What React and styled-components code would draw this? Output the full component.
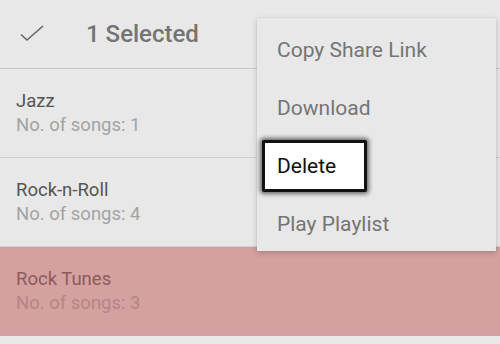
import React from "react";
import styled, { createGlobalStyle } from "styled-components";

const Global = createGlobalStyle`
  html, body {
    margin: 0;
    padding: 0;
    background: #e8e8e8;
    font-family: Roboto, "Liberation Sans", sans-serif;
  }
`;

const Screen = styled.div`
  position: relative;
  width: 500px;
  height: 344px;
  overflow: hidden;
  background: #e8e8e8;
`;

const Toolbar = styled.header`
  display: flex;
  align-items: center;
  height: 68px;
  border-bottom: 1px solid #c9c9c9;
  padding-left: 19px;
  gap: 41px;

  svg {
    flex: none;
  }
`;

const Title = styled.h1`
  margin: 0;
  font-size: 24px;
  font-weight: 500;
  color: #747474;
`;

const Row = styled.div`
  height: 89px;
  box-sizing: border-box;
  display: flex;
  flex-direction: column;
  justify-content: center;
  padding: 0 16px;
  border-bottom: 1px solid ${(p) => (p.$selected ? "#d2a0a0" : "#cfcfcf")};
  background: ${(p) => (p.$selected ? "#d4a0a0" : "transparent")};
`;

const Name = styled.div`
  font-size: 18.5px;
  line-height: 24px;
  color: ${(p) => (p.$selected ? "#8c5c5c" : "#555")};
`;

const Count = styled.div`
  font-size: 18.5px;
  line-height: 24px;
  color: ${(p) => (p.$selected ? "#b68585" : "#a3a3a3")};
`;

const Menu = styled.ul`
  position: absolute;
  top: 18px;
  left: 257px;
  width: 239px;
  height: 233px;
  box-sizing: border-box;
  margin: 0;
  padding: 3px 0 0;
  list-style: none;
  background: #e8e8e8;
  box-shadow: 0 2px 6px rgba(0, 0, 0, 0.18), 0 0 2px rgba(0, 0, 0, 0.08);
`;

const Item = styled.li`
  height: 58px;
  display: flex;
  align-items: center;
  padding-left: 20px;
  font-size: 21px;
  color: #757575;
`;

const FocusBox = styled.span`
  display: flex;
  align-items: center;
  width: 105px;
  height: 52px;
  box-sizing: border-box;
  margin-left: -15px;
  padding-left: 12px;
  background: #fff;
  border: 3px solid #111;
  border-radius: 2px;
  color: #111;
  box-shadow: 0 0 4px 2px rgba(0, 0, 0, 0.55);
`;

const lists = [
  { name: "Jazz", count: 1 },
  { name: "Rock-n-Roll", count: 4 },
  { name: "Rock Tunes", count: 3, selected: true },
];

const CheckIcon = () => (
  <svg width="26" height="20" viewBox="0 0 26 20">
    <polyline
      points="2,10.5 8,16 24,2"
      fill="none"
      stroke="#666"
      strokeWidth="1.6"
    />
  </svg>
);

export default function App() {
  return (
    <Screen>
      <Global />
      <Toolbar>
        <CheckIcon />
        <Title>1 Selected</Title>
      </Toolbar>
      {lists.map((l) => (
        <Row key={l.name} $selected={l.selected}>
          <Name $selected={l.selected}>{l.name}</Name>
          <Count $selected={l.selected}>No. of songs: {l.count}</Count>
        </Row>
      ))}
      <Menu>
        <Item>Copy Share Link</Item>
        <Item>Download</Item>
        <Item>
          <FocusBox>Delete</FocusBox>
        </Item>
        <Item>Play Playlist</Item>
      </Menu>
    </Screen>
  );
}
